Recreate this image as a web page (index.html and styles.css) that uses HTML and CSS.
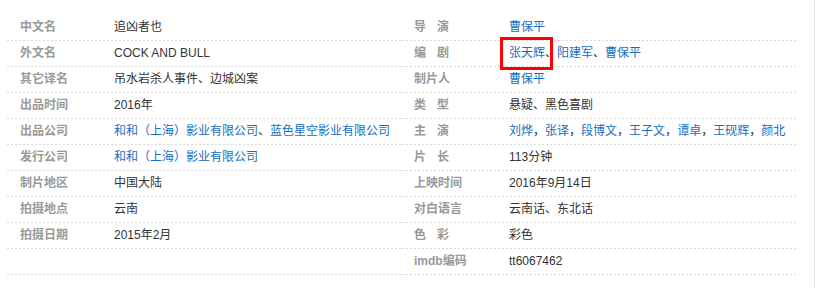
FILE: index.html
```html
<!DOCTYPE html>
<html lang="zh-CN">
<head>
<meta charset="utf-8">
<title>基本信息</title>
<link rel="stylesheet" href="styles.css">
</head>
<body>
<div class="page">
  <div class="basic-info">
    <dl class="block">
      <div class="row"><dt class="name">中文名</dt><dd class="value">追凶者也</dd></div>
      <div class="row"><dt class="name">外文名</dt><dd class="value">COCK AND BULL</dd></div>
      <div class="row"><dt class="name">其它译名</dt><dd class="value">吊水岩杀人事件、边城凶案</dd></div>
      <div class="row"><dt class="name">出品时间</dt><dd class="value">2016年</dd></div>
      <div class="row"><dt class="name">出品公司</dt><dd class="value"><a href="#">和和（上海）影业有限公司</a>、<a href="#">蓝色星空影业有限公司</a></dd></div>
      <div class="row"><dt class="name">发行公司</dt><dd class="value"><a href="#">和和（上海）影业有限公司</a></dd></div>
      <div class="row"><dt class="name">制片地区</dt><dd class="value">中国大陆</dd></div>
      <div class="row"><dt class="name">拍摄地点</dt><dd class="value">云南</dd></div>
      <div class="row"><dt class="name">拍摄日期</dt><dd class="value">2015年2月</dd></div>
      <div class="row"><dt class="name"></dt><dd class="value"></dd></div>
    </dl>
    <dl class="block">
      <div class="row"><dt class="name spaced">导演</dt><dd class="value"><a href="#">曹保平</a></dd></div>
      <div class="row"><dt class="name spaced">编剧</dt><dd class="value"><span class="marked"><a href="#">张天辉</a></span>、<a href="#">阳建军</a>、<a href="#">曹保平</a></dd></div>
      <div class="row"><dt class="name">制片人</dt><dd class="value"><a href="#">曹保平</a></dd></div>
      <div class="row"><dt class="name spaced">类型</dt><dd class="value">悬疑、黑色喜剧</dd></div>
      <div class="row"><dt class="name spaced">主演</dt><dd class="value"><a href="#">刘烨</a>，<a href="#">张译</a>，<a href="#">段博文</a>，<a href="#">王子文</a>，<a href="#">谭卓</a>，<a href="#">王砚辉</a>，<a href="#">颜北</a></dd></div>
      <div class="row"><dt class="name spaced">片长</dt><dd class="value">113分钟</dd></div>
      <div class="row"><dt class="name">上映时间</dt><dd class="value">2016年9月14日</dd></div>
      <div class="row"><dt class="name">对白语言</dt><dd class="value">云南话、东北话</dd></div>
      <div class="row"><dt class="name spaced">色彩</dt><dd class="value">彩色</dd></div>
      <div class="row"><dt class="name">imdb编码</dt><dd class="value">tt6067462</dd></div>
    </dl>
  </div>
</div>
</body>
</html>
```

FILE: styles.css
```css
html, body {
  margin: 0;
  padding: 0;
  background: #fff;
}

body {
  font-family: "Liberation Sans", Arial, "Noto Sans CJK SC", sans-serif;
  font-size: 12px;
  color: #333;
}

.page {
  width: 815px;
  height: 288px;
  border-right: 1px solid #e6e6e6;
  box-sizing: border-box;
}

.basic-info {
  display: grid;
  grid-template-columns: 395px 395px;
  padding: 15px 0 0 7px;
}

.block {
  margin: 0;
  display: flex;
  flex-direction: column;
}

.row {
  display: flex;
  height: 26px;
  box-sizing: border-box;
  padding-bottom: 1px;
  background-image: linear-gradient(to right, #d9d9d9 2px, transparent 2px);
  background-size: 4px 1px;
  background-repeat: repeat-x;
  background-position: left bottom;
}

.name {
  flex: none;
  width: 94px;
  padding-left: 13px;
  margin: 0;
  font-weight: bold;
  color: #999;
  line-height: 25px;
  white-space: nowrap;
}

.block + .block .name {
  padding-left: 12px;
  width: 95px;
}

.name.spaced {
  letter-spacing: 11px;
}

.value {
  margin: 0;
  line-height: 25px;
  white-space: nowrap;
  color: #333;
}

.value a {
  color: #136ec2;
  text-decoration: none;
}

.marked {
  position: relative;
  display: inline-block;
}

.marked::after {
  content: "";
  position: absolute;
  left: -9px;
  right: -8px;
  top: -4px;
  bottom: -4px;
  border: 3px solid #f00;
}
```
